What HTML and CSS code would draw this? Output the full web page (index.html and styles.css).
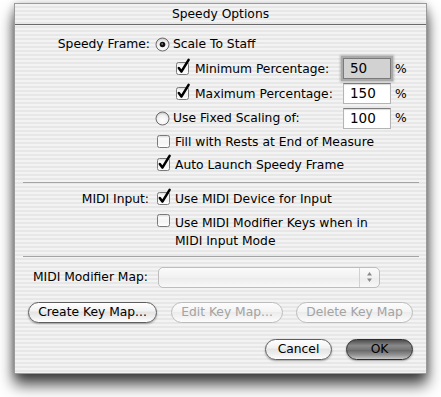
FILE: index.html
```html
<!DOCTYPE html>
<html>
<head>
<meta charset="utf-8">
<link rel="stylesheet" href="styles.css">
</head>
<body>
<svg width="0" height="0" class="defs">
  <defs>
    <linearGradient id="cbg" x1="0" y1="0" x2="0" y2="1">
      <stop offset="0" stop-color="#d8d8d8"/>
      <stop offset="0.25" stop-color="#fafafa"/>
      <stop offset="0.6" stop-color="#f4f4f4"/>
      <stop offset="1" stop-color="#ffffff"/>
    </linearGradient>
    <radialGradient id="rg" cx="0.5" cy="0.65" r="0.6">
      <stop offset="0" stop-color="#ffffff"/>
      <stop offset="0.7" stop-color="#f0f0f0"/>
      <stop offset="1" stop-color="#c8c8c8"/>
    </radialGradient>
  </defs>
</svg>
<div class="win">
  <div class="title">Speedy Options</div>
  <div class="content">
    <div class="row ra">
      <span class="lbl">Speedy Frame:</span>
      <svg class="radio" width="15" height="15" viewBox="0 0 15 15"><circle cx="7.5" cy="7.5" r="6.5" fill="url(#rg)" stroke="#6a6a6a"/><circle cx="7.5" cy="7.5" r="2.8" fill="#111"/><circle cx="7.2" cy="7" r="0.9" fill="#777"/></svg>
      <span class="rtext">Scale To Staff</span>
    </div>
    <div class="row rb">
      <span class="sp160"></span>
      <svg class="cb" width="16" height="17" viewBox="0 0 16 17"><rect x="1.5" y="4.5" width="12" height="12" rx="2" fill="url(#cbg)" stroke="#7a7a7a"/><path d="M3.8 10 L6.4 13.6 L13.6 1.8" fill="none" stroke="#000" stroke-width="2.5" stroke-linejoin="round" stroke-linecap="round"/></svg>
      <span class="ftext">Minimum Percentage:</span>
      <span class="field focus">50</span>
      <span class="pct">%</span>
    </div>
    <div class="row rc">
      <span class="sp160"></span>
      <svg class="cb" width="16" height="17" viewBox="0 0 16 17"><rect x="1.5" y="4.5" width="12" height="12" rx="2" fill="url(#cbg)" stroke="#7a7a7a"/><path d="M3.8 10 L6.4 13.6 L13.6 1.8" fill="none" stroke="#000" stroke-width="2.5" stroke-linejoin="round" stroke-linecap="round"/></svg>
      <span class="ftext">Maximum Percentage:</span>
      <span class="field">150</span>
      <span class="pct">%</span>
    </div>
    <div class="row rd">
      <span class="sp140"></span>
      <svg class="radio" width="15" height="15" viewBox="0 0 15 15"><circle cx="7.5" cy="7.5" r="6.5" fill="url(#rg)" stroke="#6a6a6a"/></svg>
      <span class="rtext wide">Use Fixed Scaling of:</span>
      <span class="field">100</span>
      <span class="pct">%</span>
    </div>
    <div class="row re">
      <span class="sp141"></span>
      <svg class="cb" width="16" height="17" viewBox="0 0 16 17"><rect x="1.5" y="4.5" width="12" height="12" rx="2" fill="url(#cbg)" stroke="#7a7a7a"/></svg>
      <span class="ctext">Fill with Rests at End of Measure</span>
    </div>
    <div class="row rf">
      <span class="sp141"></span>
      <svg class="cb" width="16" height="17" viewBox="0 0 16 17"><rect x="1.5" y="4.5" width="12" height="12" rx="2" fill="url(#cbg)" stroke="#7a7a7a"/><path d="M3.8 10 L6.4 13.6 L13.6 1.8" fill="none" stroke="#000" stroke-width="2.5" stroke-linejoin="round" stroke-linecap="round"/></svg>
      <span class="ctext">Auto Launch Speedy Frame</span>
    </div>
    <div class="sep s1"></div>
    <div class="row rg">
      <span class="lbl l2">MIDI Input:</span>
      <svg class="cb" width="16" height="17" viewBox="0 0 16 17"><rect x="1.5" y="4.5" width="12" height="12" rx="2" fill="url(#cbg)" stroke="#7a7a7a"/><path d="M3.8 10 L6.4 13.6 L13.6 1.8" fill="none" stroke="#000" stroke-width="2.5" stroke-linejoin="round" stroke-linecap="round"/></svg>
      <span class="ctext">Use MIDI Device for Input</span>
    </div>
    <div class="row rh">
      <span class="sp141"></span>
      <svg class="cb" width="16" height="17" viewBox="0 0 16 17"><rect x="1.5" y="4.5" width="12" height="12" rx="2" fill="url(#cbg)" stroke="#7a7a7a"/></svg>
      <span class="ctext multi">Use MIDI Modifier Keys when in<br>MIDI Input Mode</span>
    </div>
    <div class="sep s2"></div>
    <div class="row ri">
      <span class="maplbl">MIDI Modifier Map:</span>
      <span class="popup"><span class="arrows"><svg width="7" height="12" viewBox="0 0 7 12"><path d="M3.5 1 L6 4.5 L1 4.5 Z" fill="#8a8a8a"/><path d="M3.5 11 L6 7.5 L1 7.5 Z" fill="#8a8a8a"/></svg></span></span>
    </div>
    <div class="row rj">
      <span class="btn b1">Create Key Map...</span>
      <span class="btn dis b2">Edit Key Map...</span>
      <span class="btn dis b3">Delete Key Map</span>
    </div>
    <div class="row rk">
      <span class="btn cancel">Cancel</span>
      <span class="btn ok">OK</span>
    </div>
  </div>
</div>
</body>
</html>
```

FILE: styles.css
```css
html, body {
  margin: 0;
  padding: 0;
  background: #ffffff;
}
body {
  font-family: "DejaVu Sans", "Liberation Sans", sans-serif;
  font-size: 12.3px;
  color: #000;
  width: 441px;
  height: 397px;
  overflow: hidden;
}
.defs {
  position: absolute;
}
.win {
  margin: 3px 0 0 14px;
  width: 411px;
  height: 369px;
  border: 1px solid #9a9a9a;
  background: repeating-linear-gradient(to bottom, #f3f3f3 0px, #f3f3f3 2px, #e7e7e7 2px, #e7e7e7 4px);
  box-shadow: 0 11px 14px rgba(0, 0, 0, 0.7), 0 2px 8px rgba(0, 0, 0, 0.3);
}
.title {
  height: 20px;
  line-height: 20px;
  text-align: center;
  border-bottom: 1px solid #6a6a6a;
}
.content {
  padding-top: 7px;
}
.row {
  display: flex;
  align-items: center;
}
.ra { height: 24px; }
.rb { height: 25px; }
.rc { height: 25px; }
.rd { height: 24px; }
.re { height: 23px; }
.rf { height: 24px; }
.lbl {
  width: 135px;
  text-align: right;
  margin-right: 5px;
}
.l2 {
  width: 134px;
  margin-right: 7px;
}
.sp160 { width: 160px; }
.sp140 { width: 140px; }
.sp141 { width: 141px; }
.radio { flex: none; }
.cb { flex: none; margin-top: -5px; }
.rtext { margin-left: 3px; }
.rtext.wide { width: 170px; }
.ftext {
  margin-left: 4px;
  width: 148px;
}
.ctext { margin-left: 3px; }
.field {
  box-sizing: border-box;
  width: 48px;
  height: 21px;
  line-height: 19px;
  padding-left: 6px;
  background: #fff;
  border: 1px solid #b4b4b4;
  border-top-color: #7c7c7c;
  box-shadow: inset 0 1px 1px rgba(0, 0, 0, 0.15);
  font-size: 13.5px;
}
.field.focus {
  background: #d2d2d2;
  border: 1px solid #7a7a7a;
  box-shadow: 0 0 0 2px #a9a9a9, 0 0 2px 3px rgba(120, 120, 120, 0.45);
}
.pct {
  margin-left: 4px;
}
.sep {
  height: 1px;
  background: #a4a4a4;
  margin-left: 8px;
  width: 396px;
}
.s1 { margin-top: 5px; }
.rg { height: 24px; margin-top: 4px; }
.rh {
  margin-top: 3px;
  align-items: flex-start;
}
.rh .cb { margin-top: -4px; }
.multi {
  line-height: 18px;
  margin-top: 0;
}
.s2 { margin-top: 6px; }
.ri {
  height: 24px;
  margin-top: 8px;
}
.maplbl {
  margin-left: 18px;
  width: 125px;
}
.popup {
  box-sizing: border-box;
  width: 222px;
  height: 21px;
  border: 1px solid #bdbdbd;
  border-radius: 5px;
  background: linear-gradient(to bottom, #fbfbfb, #f1f1f1 50%, #ebebeb 50%, #f8f8f8);
  display: flex;
  justify-content: flex-end;
}
.arrows {
  width: 19px;
  border-left: 1px solid #d2d2d2;
  display: flex;
  align-items: center;
  justify-content: center;
}
.btn {
  box-sizing: border-box;
  height: 21px;
  line-height: 19px;
  border-radius: 11px;
  border: 1px solid #5e5e5e;
  text-align: center;
  background: linear-gradient(to bottom, #ffffff 0%, #f2f2f2 40%, #e4e4e4 50%, #efefef 75%, #ffffff 100%);
  box-shadow: 0 1px 2px rgba(0, 0, 0, 0.35);
}
.dis {
  color: #a3a3a3;
  border-color: #bcbcbc;
  box-shadow: none;
  background: linear-gradient(to bottom, #fcfcfc 0%, #f4f4f4 45%, #ececec 50%, #f4f4f4 75%, #fcfcfc 100%);
}
.rj {
  height: 24px;
  margin-top: 11px;
}
.b1 { margin-left: 13px; width: 129px; }
.b2 { margin-left: 14px; width: 112px; }
.b3 { margin-left: 13px; width: 117px; }
.rk {
  height: 24px;
  margin-top: 13px;
}
.cancel { margin-left: 250px; width: 67px; }
.ok {
  margin-left: 14px;
  width: 67px;
  border-color: #2e2e2e;
  background: linear-gradient(to bottom, #4e4e4e 0%, #8a8a8a 30%, #767676 50%, #666666 52%, #959595 80%, #c8c8c8 100%);
}
```
